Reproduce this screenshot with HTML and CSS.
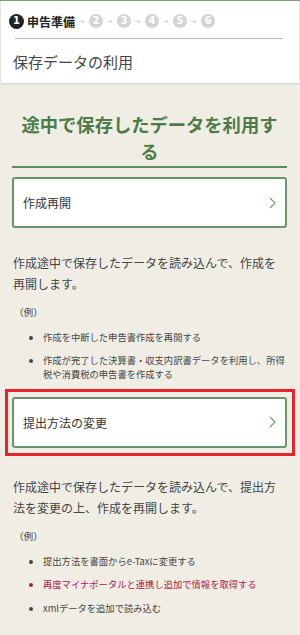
FILE: index.html
```html
<!DOCTYPE html>
<html lang="ja">
<head>
  <meta charset="UTF-8" />
  <meta name="viewport" content="width=device-width, initial-scale=1" />
  <title>保存データの利用</title>
  <link rel="stylesheet" href="styles.css">
</head>
<body>
  <div class="topline"></div>
  <div class="header">
    <div class="steps">
      <span class="num num-now">1</span><span class="step-now">申告準備</span>
      <span class="arr">→</span><span class="num">2</span>
      <span class="arr">→</span><span class="num">3</span>
      <span class="arr">→</span><span class="num">4</span>
      <span class="arr">→</span><span class="num">5</span>
      <span class="arr">→</span><span class="num">6</span>
    </div>
    <div class="header-rule"></div>
    <h1 class="page-title">保存データの利用</h1>
  </div>

  <div class="content">
    <h2 class="section-title">途中で保存したデータを利用する</h2>

    <a class="menu-btn" href="#">
      <span>作成再開</span>
      <svg class="chev" width="7" height="12" viewBox="0 0 7 12"><path d="M1 1 L6 6 L1 11" fill="none" stroke="#6f9a70" stroke-width="1.1"/></svg>
    </a>
    <p class="desc">作成途中で保存したデータを読み込んで、作成を再開します。</p>
    <div class="ex-label">（例）</div>
    <ul class="ex-list">
      <li>作成を中断した申告書作成を再開する</li>
      <li>作成が完了した決算書・収支内訳書データを利用し、所得税や消費税の申告書を作成する</li>
    </ul>

    <div class="marked">
      <a class="menu-btn" href="#">
        <span>提出方法の変更</span>
        <svg class="chev" width="7" height="12" viewBox="0 0 7 12"><path d="M1 1 L6 6 L1 11" fill="none" stroke="#6f9a70" stroke-width="1.1"/></svg>
      </a>
      <div class="red-frame"></div>
    </div>
    <p class="desc desc-2">作成途中で保存したデータを読み込んで、提出方法を変更の上、作成を再開します。</p>
    <div class="ex-label">（例）</div>
    <ul class="ex-list">
      <li>提出方法を書面からe-Taxに変更する</li>
      <li class="warn">再度マイナポータルと連携し追加で情報を取得する</li>
      <li>xmlデータを追加で読み込む</li>
    </ul>
  </div>
</body>
</html>
```

FILE: styles.css
```css
* { box-sizing: border-box; }
body {
  margin: 0;
  background: #f0eee4;
  color: #333;
  font-family: "Noto Sans CJK JP", "Noto Sans", sans-serif;
}
.topline {
  height: 1px;
  background: #7fa07f;
}
.header {
  margin: 0 1px;
  background: #fff;
  padding: 11px 0 10px;
  box-shadow: 0 1px 2px rgba(0,0,0,0.12);
}
.steps {
  display: flex;
  align-items: center;
  padding-left: 8px;
  height: 18px;
  white-space: nowrap;
}
.num {
  display: inline-flex;
  align-items: center;
  justify-content: center;
  width: 14px;
  height: 14px;
  border-radius: 50%;
  background: #d4d4d4;
  color: #fff;
  font-family: "DejaVu Sans", sans-serif;
  font-size: 10px;
  font-weight: bold;
  line-height: 1;
}
.num-now {
  width: 15px;
  height: 15px;
  background: #222;
}
.step-now {
  margin-left: 3px;
  font-size: 12px;
  font-weight: bold;
  color: #222;
}
.arr {
  width: 7px;
  margin: 0 4px 0 3px;
  font-family: "DejaVu Sans", sans-serif;
  font-size: 8px;
  color: #c8c8c8;
}
.header-rule {
  height: 1px;
  background: #a9c3a3;
  margin: 8px 16px 0 14px;
}
.page-title {
  margin: 12px 0 0 12px;
  font-size: 15px;
  line-height: 22px;
  font-weight: normal;
  color: #444;
}
.content {
  padding: 0 13px 0 12px;
}
.section-title {
  margin: 28px 0 0;
  padding: 0 8px 1px;
  text-align: center;
  font-size: 18.3px;
  line-height: 27px;
  font-weight: bold;
  color: #4d7c48;
  border-bottom: 2px solid #5d8b5c;
}
.menu-btn {
  display: flex;
  align-items: center;
  justify-content: space-between;
  height: 51px;
  margin-top: 9px;
  padding: 0 9px 0 9px;
  background: #fff;
  border: 2px solid #6a946a;
  border-radius: 3px;
  color: #333;
  font-size: 12px;
  text-decoration: none;
}
.chev { display: block; }
.desc {
  margin: 24px 0 0 1px;
  font-size: 12px;
  line-height: 21px;
  color: #444;
}
.desc-2 { margin-top: 28.5px; }
.ex-label {
  margin: 9.5px 0 0 2px;
  font-size: 9.6px;
  line-height: 16px;
  color: #444;
}
.ex-list {
  margin: 10px 0 0;
  padding-left: 31px;
  font-size: 9.3px;
  line-height: 14px;
  color: #444;
}
.ex-list li { margin-bottom: 9.5px; }
.ex-list .warn { color: #a8224a; }
.marked {
  position: relative;
  margin-top: 15.5px;
}
.red-frame {
  position: absolute;
  top: -8px;
  left: -7px;
  right: -8px;
  bottom: -8px;
  border: 3px solid #e8232b;
  pointer-events: none;
}
```
